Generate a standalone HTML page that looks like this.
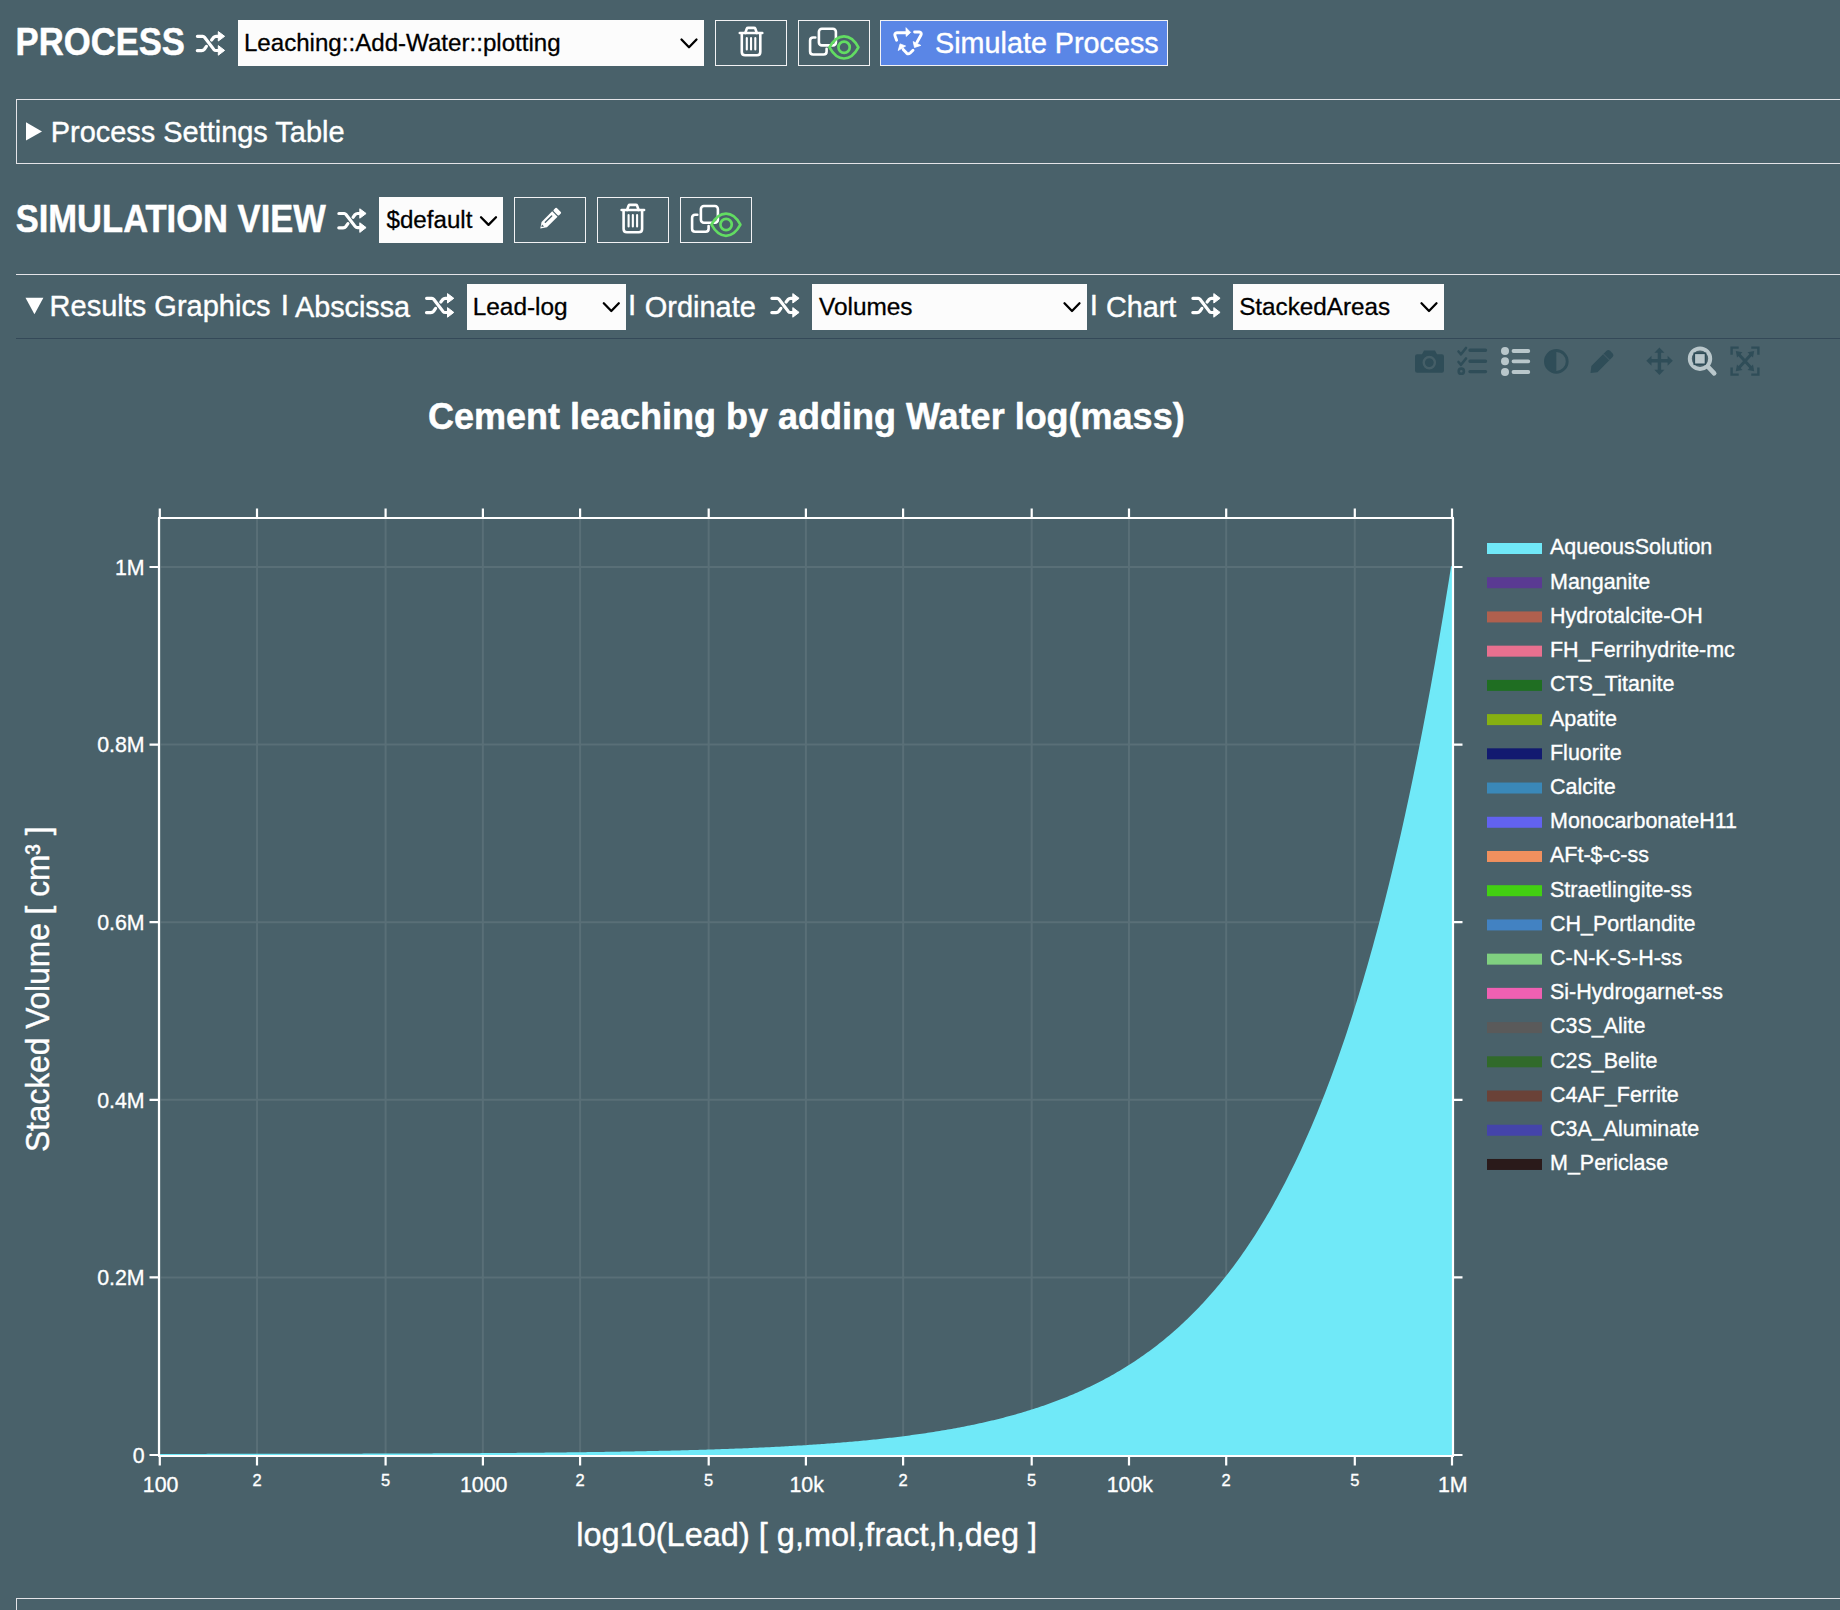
<!DOCTYPE html>
<html><head><meta charset="utf-8">
<style>
html,body{margin:0;padding:0;}
body{width:1840px;height:1610px;overflow:hidden;background:#49616a;position:relative;font-family:"Liberation Sans",sans-serif;}
svg{position:absolute;left:0;top:0;}
svg text{font-family:"Liberation Sans",sans-serif;}
.sel{position:absolute;background:#fcfcfc;}
.btn{position:absolute;box-sizing:border-box;border:1.4px solid #f2f2f4;}
.hl{position:absolute;height:1px;background:#e4e4e8;}
</style></head><body>
<div class="sel" style="left:238px;top:20px;width:466px;height:46px;"></div>
<div class="btn" style="left:715px;top:20px;width:72px;height:46px;"></div>
<div class="btn" style="left:798px;top:20px;width:72px;height:46px;"></div>
<div class="btn" style="left:880px;top:20px;width:288px;height:46px;background:#5a86e6;"></div>
<div style="position:absolute;left:16px;top:99px;width:1830px;height:65px;box-sizing:border-box;border:1px solid #e4e4e8;border-right:none;"></div>
<div class="sel" style="left:379px;top:197px;width:124px;height:46px;"></div>
<div class="btn" style="left:514px;top:197px;width:72px;height:46px;"></div>
<div class="btn" style="left:597px;top:197px;width:72px;height:46px;"></div>
<div class="btn" style="left:680px;top:197px;width:72px;height:46px;"></div>
<div class="hl" style="left:16px;top:274px;width:1824px;"></div>
<div class="hl" style="left:16px;top:338px;width:1824px;background:#344958;"></div>
<div class="sel" style="left:467px;top:284px;width:159px;height:46px;"></div>
<div class="sel" style="left:812px;top:284px;width:275px;height:46px;"></div>
<div class="sel" style="left:1233px;top:284px;width:211px;height:46px;"></div>
<div class="hl" style="left:16px;top:1598px;width:1824px;"></div>
<div style="position:absolute;left:16px;top:1598px;width:1px;height:12px;background:#e4e4e8;"></div>
<svg width="1840" height="1610" viewBox="0 0 1840 1610"><g transform="translate(196,31) scale(1.0)" fill="none" stroke="#fff" stroke-width="3.2" stroke-linecap="round" stroke-linejoin="round"><path d="M1.4,5.3 H6.8 Q7.8,5.3 8.5,6.2 L17.8,18.4 Q18.7,19.5 20,19.5 H24"/><path d="M1.3,19.6 H5.6 Q7.3,19.6 8.4,18.2 L10.4,15.4"/><path d="M15.6,9 L17.6,6.4 Q18.6,5.3 20,5.3 H24"/></g><g transform="translate(196,31) scale(1.0)" fill="#fff" stroke="#fff" stroke-width="1" stroke-linejoin="round"><path d="M22.3,0.6 L28.6,5.3 L22.3,10 Z"/><path d="M22.3,14.6 L28.6,19.4 L22.3,24.2 Z"/></g>
<path d="M681.5,39.5 L689.0,47.2 L696.5,39.5" fill="none" stroke="#000" stroke-width="2.3" stroke-linecap="round" stroke-linejoin="round"/>
<g transform="translate(738.5,27)" fill="none" stroke="#fff" stroke-width="2.6" stroke-linecap="round" stroke-linejoin="round"><path d="M1.3,6 H23.8"/><path d="M6.8,6 L8.3,1.6 C8.6,1.0 9,0.9 9.6,0.9 H15.5 C16.1,0.9 16.5,1.0 16.8,1.6 L18.3,6"/><path d="M3.3,6.5 V25 C3.3,27 4.6,28.3 6.6,28.3 H18.5 C20.5,28.3 21.8,27 21.8,25 V6.5"/><path d="M8.3,11 V22.5 M12.55,11 V22.5 M16.8,11 V22.5" stroke-width="2.1"/></g>
<g transform="translate(798,20)" fill="none" stroke-linecap="round" stroke-linejoin="round"><rect x="20.9" y="8.7" width="17" height="16.7" rx="3" stroke="#fff" stroke-width="2.6"/><path d="M17.3,17.5 H15.1 C13.2,17.5 12.1,18.6 12.1,20.5 V31.5 C12.1,33.4 13.2,34.5 15.1,34.5 H25.6 C27.5,34.5 28.6,33.4 28.6,31.5 V28.8" stroke="#fff" stroke-width="2.6"/><path d="M31.5,27.4 C35,21 39.5,16.4 46,16.4 C52.5,16.4 57,21 60.4,27.4 C57,33.8 52.5,38.5 46,38.5 C39.5,38.5 35,33.8 31.5,27.4 Z" stroke="#62dc62" stroke-width="2.7"/><circle cx="46.1" cy="27.2" r="5.65" stroke="#62dc62" stroke-width="2.7"/></g>
<g transform="translate(892,26)" fill="none" stroke="#fff" stroke-width="2.9" stroke-linecap="round" stroke-linejoin="round"><path d="M4.6,14.2 L2.9,9.6 C2.5,8.2 3.3,6.8 4.9,6.8 H14.5"/><path d="M22.6,6 H27.3 C28.9,6 29.8,7.6 29,9 L25,16.2"/><path d="M21,24.3 L18.2,27 C17.2,27.9 15.6,28 14.6,27.1 L11.2,23.4"/></g><g transform="translate(892,26)" fill="#fff" stroke="#fff" stroke-width="0.8" stroke-linejoin="round"><path d="M14,1.7 L18.6,6.4 L14.2,10.4 Z"/><path d="M21.2,15.6 L28.8,19.4 L22.5,21.5 Z"/><path d="M6.2,24.5 L8.1,17.9 L13.6,20 Z"/></g>
<path d="M26,122.3 L42,131.4 L26,140.5 Z" fill="#fff"/>
<g transform="translate(337.5,208.2) scale(1.0)" fill="none" stroke="#fff" stroke-width="3.2" stroke-linecap="round" stroke-linejoin="round"><path d="M1.4,5.3 H6.8 Q7.8,5.3 8.5,6.2 L17.8,18.4 Q18.7,19.5 20,19.5 H24"/><path d="M1.3,19.6 H5.6 Q7.3,19.6 8.4,18.2 L10.4,15.4"/><path d="M15.6,9 L17.6,6.4 Q18.6,5.3 20,5.3 H24"/></g><g transform="translate(337.5,208.2) scale(1.0)" fill="#fff" stroke="#fff" stroke-width="1" stroke-linejoin="round"><path d="M22.3,0.6 L28.6,5.3 L22.3,10 Z"/><path d="M22.3,14.6 L28.6,19.4 L22.3,24.2 Z"/></g>
<path d="M481,217.2 L488.5,224.89999999999998 L496,217.2" fill="none" stroke="#000" stroke-width="2.3" stroke-linecap="round" stroke-linejoin="round"/>
<g transform="translate(540.3,228.6) rotate(-45)"><path d="M0,0 L5.6,-3.8 H20.6 V3.8 H5.6 Z" fill="#fff"/><rect x="21.8" y="-3.8" width="4.4" height="7.6" rx="1" fill="#fff"/><path d="M8,-0.9 H17" stroke="#49616a" stroke-width="1.4" stroke-linecap="round"/><path d="M1.9,-0.5 L4.1,-1.8 L4.1,1.3 Z" fill="#49616a"/></g>
<g transform="translate(620.3,204)" fill="none" stroke="#fff" stroke-width="2.6" stroke-linecap="round" stroke-linejoin="round"><path d="M1.3,6 H23.8"/><path d="M6.8,6 L8.3,1.6 C8.6,1.0 9,0.9 9.6,0.9 H15.5 C16.1,0.9 16.5,1.0 16.8,1.6 L18.3,6"/><path d="M3.3,6.5 V25 C3.3,27 4.6,28.3 6.6,28.3 H18.5 C20.5,28.3 21.8,27 21.8,25 V6.5"/><path d="M8.3,11 V22.5 M12.55,11 V22.5 M16.8,11 V22.5" stroke-width="2.1"/></g>
<g transform="translate(680,197.3)" fill="none" stroke-linecap="round" stroke-linejoin="round"><rect x="20.9" y="8.7" width="17" height="16.7" rx="3" stroke="#fff" stroke-width="2.6"/><path d="M17.3,17.5 H15.1 C13.2,17.5 12.1,18.6 12.1,20.5 V31.5 C12.1,33.4 13.2,34.5 15.1,34.5 H25.6 C27.5,34.5 28.6,33.4 28.6,31.5 V28.8" stroke="#fff" stroke-width="2.6"/><path d="M31.5,27.4 C35,21 39.5,16.4 46,16.4 C52.5,16.4 57,21 60.4,27.4 C57,33.8 52.5,38.5 46,38.5 C39.5,38.5 35,33.8 31.5,27.4 Z" stroke="#62dc62" stroke-width="2.7"/><circle cx="46.1" cy="27.2" r="5.65" stroke="#62dc62" stroke-width="2.7"/></g>
<path d="M25.5,297.7 L43.4,297.7 L34.45,314.3 Z" fill="#fff"/>
<g transform="translate(425.2,293) scale(1.0)" fill="none" stroke="#fff" stroke-width="3.2" stroke-linecap="round" stroke-linejoin="round"><path d="M1.4,5.3 H6.8 Q7.8,5.3 8.5,6.2 L17.8,18.4 Q18.7,19.5 20,19.5 H24"/><path d="M1.3,19.6 H5.6 Q7.3,19.6 8.4,18.2 L10.4,15.4"/><path d="M15.6,9 L17.6,6.4 Q18.6,5.3 20,5.3 H24"/></g><g transform="translate(425.2,293) scale(1.0)" fill="#fff" stroke="#fff" stroke-width="1" stroke-linejoin="round"><path d="M22.3,0.6 L28.6,5.3 L22.3,10 Z"/><path d="M22.3,14.6 L28.6,19.4 L22.3,24.2 Z"/></g>
<path d="M603.8,303.3 L611.3,311.0 L618.8,303.3" fill="none" stroke="#000" stroke-width="2.3" stroke-linecap="round" stroke-linejoin="round"/>
<g transform="translate(770.5,293) scale(1.0)" fill="none" stroke="#fff" stroke-width="3.2" stroke-linecap="round" stroke-linejoin="round"><path d="M1.4,5.3 H6.8 Q7.8,5.3 8.5,6.2 L17.8,18.4 Q18.7,19.5 20,19.5 H24"/><path d="M1.3,19.6 H5.6 Q7.3,19.6 8.4,18.2 L10.4,15.4"/><path d="M15.6,9 L17.6,6.4 Q18.6,5.3 20,5.3 H24"/></g><g transform="translate(770.5,293) scale(1.0)" fill="#fff" stroke="#fff" stroke-width="1" stroke-linejoin="round"><path d="M22.3,0.6 L28.6,5.3 L22.3,10 Z"/><path d="M22.3,14.6 L28.6,19.4 L22.3,24.2 Z"/></g>
<path d="M1064.5,303.3 L1072.0,311.0 L1079.5,303.3" fill="none" stroke="#000" stroke-width="2.3" stroke-linecap="round" stroke-linejoin="round"/>
<g transform="translate(1191.5,293) scale(1.0)" fill="none" stroke="#fff" stroke-width="3.2" stroke-linecap="round" stroke-linejoin="round"><path d="M1.4,5.3 H6.8 Q7.8,5.3 8.5,6.2 L17.8,18.4 Q18.7,19.5 20,19.5 H24"/><path d="M1.3,19.6 H5.6 Q7.3,19.6 8.4,18.2 L10.4,15.4"/><path d="M15.6,9 L17.6,6.4 Q18.6,5.3 20,5.3 H24"/></g><g transform="translate(1191.5,293) scale(1.0)" fill="#fff" stroke="#fff" stroke-width="1" stroke-linejoin="round"><path d="M22.3,0.6 L28.6,5.3 L22.3,10 Z"/><path d="M22.3,14.6 L28.6,19.4 L22.3,24.2 Z"/></g>
<path d="M1421.5,303.3 L1429.0,311.0 L1436.5,303.3" fill="none" stroke="#000" stroke-width="2.3" stroke-linecap="round" stroke-linejoin="round"/>
<g fill="#2f4d58"><path d="M1415,356.5 Q1415,354.3 1417.2,354.3 H1422 L1424,350.5 H1435 L1437,354.3 H1441.8 Q1444,354.3 1444,356.5 V370.5 Q1444,372.7 1441.8,372.7 H1417.2 Q1415,372.7 1415,370.5 Z"/></g>
<circle cx="1429.3" cy="362.6" r="5.6" fill="none" stroke="#49616a" stroke-width="2.4" opacity="0.85"/>
<g fill="none" stroke="#2f4d58" stroke-width="2.6" stroke-linecap="round" stroke-linejoin="round"><path d="M1458.5,351.5 L1461,354.3 L1466,348"/><path d="M1458.5,362 L1461,364.8 L1466,358.5"/><circle cx="1461.3" cy="371.2" r="2.6"/><path d="M1470,350.3 H1485.5 M1470,361.3 H1485.5 M1470,371.6 H1485.5" stroke-width="3.4"/></g>
<g fill="#b9c7cb"><circle cx="1505" cy="351" r="4"/><circle cx="1505" cy="361.3" r="4"/><circle cx="1505" cy="372" r="4"/></g>
<g stroke="#b9c7cb" stroke-width="3.8" stroke-linecap="round"><path d="M1513.5,351 H1528.3 M1513.5,361.3 H1528.3 M1513.5,372 H1528.3"/></g>
<circle cx="1556.3" cy="361.4" r="10.9" fill="none" stroke="#2f4d58" stroke-width="2.8"/>
<path d="M1556.3,350.5 A10.9,10.9 0 0 0 1556.3,372.3 Z" fill="#2f4d58"/>
<g transform="translate(1590.5,373) rotate(-45)"><path d="M0,0 L5.5,-4.3 H27 Q29.5,-4.3 29.5,-1.8 V1.8 Q29.5,4.3 27,4.3 H5.5 Z" fill="#2f4d58"/><path d="M22.5,-4.5 V4.5" stroke="#49616a" stroke-width="1.2" opacity="0.6"/></g>
<g stroke="#2f4d58" stroke-width="3.4" stroke-linecap="butt"><path d="M1650,360.8 H1669.3 M1659.4,351.2 V370.8"/></g>
<g fill="#2f4d58"><path d="M1646.3,360.8 L1651.5,355.8 V365.8 Z"/><path d="M1672.8,360.8 L1667.6,355.8 V365.8 Z"/><path d="M1659.4,347.6 L1654.4,352.8 H1664.4 Z"/><path d="M1659.4,374.9 L1654.4,369.7 H1664.4 Z"/></g>
<circle cx="1700" cy="358.7" r="10.2" fill="none" stroke="#b9c7cb" stroke-width="4"/>
<rect x="1694.3" y="353.3" width="11.2" height="11" fill="#b9c7cb" stroke="#2f4d58" stroke-width="1.6"/>
<path d="M1707.5,366.2 L1714.2,373.4" stroke="#b9c7cb" stroke-width="4.6" stroke-linecap="round"/>
<g fill="none" stroke="#2f4d58" stroke-width="2.4" stroke-linecap="square"><path d="M1731.6,353.5 V347.6 H1737.5 M1752.5,347.6 H1758.4 V353.5 M1731.6,368.7 V374.6 H1737.5 M1752.5,374.6 H1758.4 V368.7"/></g>
<g stroke="#2f4d58" stroke-width="3" stroke-linecap="butt"><path d="M1738.5,354 L1751.5,368.2 M1751.5,354 L1738.5,368.2"/></g>
<g fill="#2f4d58"><path d="M1735.8,351 L1742.5,352.2 L1737,357.6 Z"/><path d="M1754.2,351 L1747.5,352.2 L1753,357.6 Z"/><path d="M1735.8,371.2 L1742.5,370 L1737,364.6 Z"/><path d="M1754.2,371.2 L1747.5,370 L1753,364.6 Z"/></g>
<text id="process" x="0" y="0" font-size="38.500" font-weight="bold" fill="#fff" stroke="#fff" stroke-width="0.5" stroke-linejoin="round" transform="translate(15.60,55.10) scale(0.9000,1)">PROCESS</text>
<text id="leach" x="0" y="0" font-size="24.400" fill="#000" stroke="#000" stroke-width="0.3" stroke-linejoin="round" transform="translate(243.90,51.10) scale(0.9886,1)">Leaching::Add-Water::plotting</text>
<text id="simulate" x="0" y="0" font-size="29.500" fill="#fff" stroke="#fff" stroke-width="0.4" stroke-linejoin="round" transform="translate(935.00,52.60) scale(0.9750,1)">Simulate Process</text>
<text id="pst" x="0" y="0" font-size="29.500" fill="#fff" stroke="#fff" stroke-width="0.4" stroke-linejoin="round" transform="translate(50.70,141.80) scale(0.9811,1)">Process Settings Table</text>
<text id="simview" x="0" y="0" font-size="38.500" font-weight="bold" fill="#fff" stroke="#fff" stroke-width="0.5" stroke-linejoin="round" transform="translate(15.70,232.10) scale(0.8974,1)">SIMULATION VIEW</text>
<text id="default" x="0" y="0" font-size="24.400" fill="#000" stroke="#000" stroke-width="0.3" stroke-linejoin="round" transform="translate(386.50,228.00) scale(0.9895,1)">$default</text>
<text id="results" x="0" y="0" font-size="29.500" fill="#fff" stroke="#fff" stroke-width="0.4" stroke-linejoin="round" transform="translate(49.60,316.00) scale(0.9832,1)">Results Graphics</text>
<text id="I1" x="0" y="0" font-size="29.500" fill="#fff" stroke="#fff" stroke-width="0.4" stroke-linejoin="round" transform="translate(280.70,315.20) scale(1.0000,1)">I</text>
<text id="abscissa" x="0" y="0" font-size="29.500" fill="#fff" stroke="#fff" stroke-width="0.4" stroke-linejoin="round" transform="translate(295.00,316.80) scale(0.9750,1)">Abscissa</text>
<text id="leadlog" x="0" y="0" font-size="24.400" fill="#000" stroke="#000" stroke-width="0.3" stroke-linejoin="round" transform="translate(472.70,314.80) scale(1.0001,1)">Lead-log</text>
<text id="I2" x="0" y="0" font-size="29.500" fill="#fff" stroke="#fff" stroke-width="0.4" stroke-linejoin="round" transform="translate(628.10,315.20) scale(1.0000,1)">I</text>
<text id="ordinate" x="0" y="0" font-size="29.500" fill="#fff" stroke="#fff" stroke-width="0.4" stroke-linejoin="round" transform="translate(644.70,316.80) scale(0.9831,1)">Ordinate</text>
<text id="volumes" x="0" y="0" font-size="24.400" fill="#000" stroke="#000" stroke-width="0.3" stroke-linejoin="round" transform="translate(819.00,314.80) scale(1.0000,1)">Volumes</text>
<text id="I3" x="0" y="0" font-size="29.500" fill="#fff" stroke="#fff" stroke-width="0.4" stroke-linejoin="round" transform="translate(1089.70,315.20) scale(1.0000,1)">I</text>
<text id="chart" x="0" y="0" font-size="29.500" fill="#fff" stroke="#fff" stroke-width="0.4" stroke-linejoin="round" transform="translate(1106.00,316.80) scale(0.9750,1)">Chart</text>
<text id="stacked" x="0" y="0" font-size="24.400" fill="#000" stroke="#000" stroke-width="0.3" stroke-linejoin="round" transform="translate(1239.20,314.80) scale(0.9940,1)">StackedAreas</text>
<text id="title" x="0" y="0" font-size="37.500" font-weight="bold" fill="#fff" stroke="#fff" stroke-width="0.5" stroke-linejoin="round" transform="translate(428.00,429.00) scale(0.9600,1)">Cement leaching by adding Water log(mass)</text>
<text id="xtitle" x="0" y="0" font-size="33.000" fill="#fff" stroke="#fff" stroke-width="0.4" stroke-linejoin="round" transform="translate(576.20,1545.80) scale(0.9855,1)">log10(Lead) [ g,mol,fract,h,deg ]</text>
<path d="M159.80,518 V1456 M257.05,518 V1456 M385.60,518 V1456 M482.85,518 V1456 M580.10,518 V1456 M708.65,518 V1456 M805.90,518 V1456 M903.15,518 V1456 M1031.70,518 V1456 M1128.95,518 V1456 M1226.20,518 V1456 M1354.75,518 V1456 M1452.00,518 V1456 M159,1455.00 H1453 M159,1277.40 H1453 M159,1099.80 H1453 M159,922.20 H1453 M159,744.60 H1453 M159,567.00 H1453" stroke="rgba(255,255,255,0.09)" stroke-width="2" fill="none"/>
<path d="M159.8,1455.0 L159.8,1454.91 L161.8,1454.91 L163.8,1454.91 L165.8,1454.91 L167.8,1454.91 L169.8,1454.90 L171.8,1454.90 L173.8,1454.90 L175.8,1454.90 L177.8,1454.90 L179.8,1454.90 L181.8,1454.90 L183.8,1454.89 L185.8,1454.89 L187.8,1454.89 L189.8,1454.89 L191.8,1454.89 L193.8,1454.89 L195.8,1454.89 L197.8,1454.88 L199.8,1454.88 L201.8,1454.88 L203.8,1454.88 L205.8,1454.88 L207.8,1454.87 L209.8,1454.87 L211.8,1454.87 L213.8,1454.87 L215.8,1454.87 L217.8,1454.87 L219.8,1454.86 L221.8,1454.86 L223.8,1454.86 L225.8,1454.86 L227.8,1454.86 L229.8,1454.85 L231.8,1454.85 L233.8,1454.85 L235.8,1454.85 L237.8,1454.85 L239.8,1454.84 L241.8,1454.84 L243.8,1454.84 L245.8,1454.84 L247.8,1454.83 L249.8,1454.83 L251.8,1454.83 L253.8,1454.83 L255.8,1454.82 L257.8,1454.82 L259.8,1454.82 L261.8,1454.82 L263.8,1454.81 L265.8,1454.81 L267.8,1454.81 L269.8,1454.81 L271.8,1454.80 L273.8,1454.80 L275.8,1454.80 L277.8,1454.79 L279.8,1454.79 L281.8,1454.79 L283.8,1454.79 L285.8,1454.78 L287.8,1454.78 L289.8,1454.78 L291.8,1454.77 L293.8,1454.77 L295.8,1454.77 L297.8,1454.76 L299.8,1454.76 L301.8,1454.76 L303.8,1454.75 L305.8,1454.75 L307.8,1454.74 L309.8,1454.74 L311.8,1454.74 L313.8,1454.73 L315.8,1454.73 L317.8,1454.73 L319.8,1454.72 L321.8,1454.72 L323.8,1454.71 L325.8,1454.71 L327.8,1454.71 L329.8,1454.70 L331.8,1454.70 L333.8,1454.69 L335.8,1454.69 L337.8,1454.68 L339.8,1454.68 L341.8,1454.68 L343.8,1454.67 L345.8,1454.67 L347.8,1454.66 L349.8,1454.66 L351.8,1454.65 L353.8,1454.65 L355.8,1454.64 L357.8,1454.64 L359.8,1454.63 L361.8,1454.63 L363.8,1454.62 L365.8,1454.61 L367.8,1454.61 L369.8,1454.60 L371.8,1454.60 L373.8,1454.59 L375.8,1454.59 L377.8,1454.58 L379.8,1454.57 L381.8,1454.57 L383.8,1454.56 L385.8,1454.56 L387.8,1454.55 L389.8,1454.54 L391.8,1454.54 L393.8,1454.53 L395.8,1454.52 L397.8,1454.52 L399.8,1454.51 L401.8,1454.50 L403.8,1454.49 L405.8,1454.49 L407.8,1454.48 L409.8,1454.47 L411.8,1454.46 L413.8,1454.46 L415.8,1454.45 L417.8,1454.44 L419.8,1454.43 L421.8,1454.43 L423.8,1454.42 L425.8,1454.41 L427.8,1454.40 L429.8,1454.39 L431.8,1454.38 L433.8,1454.37 L435.8,1454.37 L437.8,1454.36 L439.8,1454.35 L441.8,1454.34 L443.8,1454.33 L445.8,1454.32 L447.8,1454.31 L449.8,1454.30 L451.8,1454.29 L453.8,1454.28 L455.8,1454.27 L457.8,1454.26 L459.8,1454.25 L461.8,1454.24 L463.8,1454.22 L465.8,1454.21 L467.8,1454.20 L469.8,1454.19 L471.8,1454.18 L473.8,1454.17 L475.8,1454.16 L477.8,1454.14 L479.8,1454.13 L481.8,1454.12 L483.8,1454.11 L485.8,1454.09 L487.8,1454.08 L489.8,1454.07 L491.8,1454.05 L493.8,1454.04 L495.8,1454.03 L497.8,1454.01 L499.8,1454.00 L501.8,1453.98 L503.8,1453.97 L505.8,1453.95 L507.8,1453.94 L509.8,1453.92 L511.8,1453.91 L513.8,1453.89 L515.8,1453.88 L517.8,1453.86 L519.8,1453.84 L521.8,1453.83 L523.8,1453.81 L525.8,1453.79 L527.8,1453.78 L529.8,1453.76 L531.8,1453.74 L533.8,1453.72 L535.8,1453.70 L537.8,1453.69 L539.8,1453.67 L541.8,1453.65 L543.8,1453.63 L545.8,1453.61 L547.8,1453.59 L549.8,1453.57 L551.8,1453.55 L553.8,1453.53 L555.8,1453.51 L557.8,1453.48 L559.8,1453.46 L561.8,1453.44 L563.8,1453.42 L565.8,1453.40 L567.8,1453.37 L569.8,1453.35 L571.8,1453.33 L573.8,1453.30 L575.8,1453.28 L577.8,1453.25 L579.8,1453.23 L581.8,1453.20 L583.8,1453.18 L585.8,1453.15 L587.8,1453.12 L589.8,1453.10 L591.8,1453.07 L593.8,1453.04 L595.8,1453.01 L597.8,1452.99 L599.8,1452.96 L601.8,1452.93 L603.8,1452.90 L605.8,1452.87 L607.8,1452.84 L609.8,1452.81 L611.8,1452.77 L613.8,1452.74 L615.8,1452.71 L617.8,1452.68 L619.8,1452.64 L621.8,1452.61 L623.8,1452.57 L625.8,1452.54 L627.8,1452.50 L629.8,1452.47 L631.8,1452.43 L633.8,1452.40 L635.8,1452.36 L637.8,1452.32 L639.8,1452.28 L641.8,1452.24 L643.8,1452.20 L645.8,1452.16 L647.8,1452.12 L649.8,1452.08 L651.8,1452.04 L653.8,1452.00 L655.8,1451.95 L657.8,1451.91 L659.8,1451.87 L661.8,1451.82 L663.8,1451.77 L665.8,1451.73 L667.8,1451.68 L669.8,1451.63 L671.8,1451.59 L673.8,1451.54 L675.8,1451.49 L677.8,1451.44 L679.8,1451.39 L681.8,1451.33 L683.8,1451.28 L685.8,1451.23 L687.8,1451.17 L689.8,1451.12 L691.8,1451.06 L693.8,1451.01 L695.8,1450.95 L697.8,1450.89 L699.8,1450.83 L701.8,1450.77 L703.8,1450.71 L705.8,1450.65 L707.8,1450.59 L709.8,1450.52 L711.8,1450.46 L713.8,1450.39 L715.8,1450.33 L717.8,1450.26 L719.8,1450.19 L721.8,1450.12 L723.8,1450.05 L725.8,1449.98 L727.8,1449.91 L729.8,1449.84 L731.8,1449.76 L733.8,1449.69 L735.8,1449.61 L737.8,1449.53 L739.8,1449.46 L741.8,1449.38 L743.8,1449.30 L745.8,1449.21 L747.8,1449.13 L749.8,1449.05 L751.8,1448.96 L753.8,1448.87 L755.8,1448.79 L757.8,1448.70 L759.8,1448.61 L761.8,1448.52 L763.8,1448.42 L765.8,1448.33 L767.8,1448.23 L769.8,1448.13 L771.8,1448.04 L773.8,1447.94 L775.8,1447.83 L777.8,1447.73 L779.8,1447.63 L781.8,1447.52 L783.8,1447.41 L785.8,1447.31 L787.8,1447.19 L789.8,1447.08 L791.8,1446.97 L793.8,1446.85 L795.8,1446.74 L797.8,1446.62 L799.8,1446.50 L801.8,1446.38 L803.8,1446.25 L805.8,1446.13 L807.8,1446.00 L809.8,1445.87 L811.8,1445.74 L813.8,1445.61 L815.8,1445.47 L817.8,1445.33 L819.8,1445.20 L821.8,1445.05 L823.8,1444.91 L825.8,1444.77 L827.8,1444.62 L829.8,1444.47 L831.8,1444.32 L833.8,1444.17 L835.8,1444.01 L837.8,1443.85 L839.8,1443.69 L841.8,1443.53 L843.8,1443.37 L845.8,1443.20 L847.8,1443.03 L849.8,1442.86 L851.8,1442.68 L853.8,1442.51 L855.8,1442.33 L857.8,1442.15 L859.8,1441.96 L861.8,1441.77 L863.8,1441.58 L865.8,1441.39 L867.8,1441.20 L869.8,1441.00 L871.8,1440.80 L873.8,1440.59 L875.8,1440.39 L877.8,1440.18 L879.8,1439.96 L881.8,1439.75 L883.8,1439.53 L885.8,1439.31 L887.8,1439.08 L889.8,1438.85 L891.8,1438.62 L893.8,1438.38 L895.8,1438.15 L897.8,1437.90 L899.8,1437.66 L901.8,1437.41 L903.8,1437.16 L905.8,1436.90 L907.8,1436.64 L909.8,1436.38 L911.8,1436.11 L913.8,1435.84 L915.8,1435.56 L917.8,1435.28 L919.8,1435.00 L921.8,1434.71 L923.8,1434.42 L925.8,1434.13 L927.8,1433.83 L929.8,1433.52 L931.8,1433.22 L933.8,1432.90 L935.8,1432.59 L937.8,1432.26 L939.8,1431.94 L941.8,1431.61 L943.8,1431.27 L945.8,1430.93 L947.8,1430.58 L949.8,1430.23 L951.8,1429.88 L953.8,1429.52 L955.8,1429.15 L957.8,1428.78 L959.8,1428.40 L961.8,1428.02 L963.8,1427.64 L965.8,1427.24 L967.8,1426.84 L969.8,1426.44 L971.8,1426.03 L973.8,1425.61 L975.8,1425.19 L977.8,1424.76 L979.8,1424.33 L981.8,1423.89 L983.8,1423.44 L985.8,1422.99 L987.8,1422.53 L989.8,1422.06 L991.8,1421.59 L993.8,1421.11 L995.8,1420.62 L997.8,1420.13 L999.8,1419.63 L1001.8,1419.12 L1003.8,1418.61 L1005.8,1418.09 L1007.8,1417.56 L1009.8,1417.02 L1011.8,1416.47 L1013.8,1415.92 L1015.8,1415.36 L1017.8,1414.79 L1019.8,1414.21 L1021.8,1413.63 L1023.8,1413.03 L1025.8,1412.43 L1027.8,1411.82 L1029.8,1411.20 L1031.8,1410.57 L1033.8,1409.93 L1035.8,1409.28 L1037.8,1408.63 L1039.8,1407.96 L1041.8,1407.29 L1043.8,1406.60 L1045.8,1405.91 L1047.8,1405.20 L1049.8,1404.49 L1051.8,1403.76 L1053.8,1403.03 L1055.8,1402.28 L1057.8,1401.52 L1059.8,1400.76 L1061.8,1399.98 L1063.8,1399.19 L1065.8,1398.38 L1067.8,1397.57 L1069.8,1396.75 L1071.8,1395.91 L1073.8,1395.06 L1075.8,1394.20 L1077.8,1393.33 L1079.8,1392.44 L1081.8,1391.55 L1083.8,1390.63 L1085.8,1389.71 L1087.8,1388.77 L1089.8,1387.82 L1091.8,1386.86 L1093.8,1385.88 L1095.8,1384.89 L1097.8,1383.88 L1099.8,1382.86 L1101.8,1381.82 L1103.8,1380.77 L1105.8,1379.71 L1107.8,1378.63 L1109.8,1377.53 L1111.8,1376.42 L1113.8,1375.29 L1115.8,1374.14 L1117.8,1372.98 L1119.8,1371.81 L1121.8,1370.61 L1123.8,1369.40 L1125.8,1368.17 L1127.8,1366.92 L1129.8,1365.66 L1131.8,1364.38 L1133.8,1363.08 L1135.8,1361.76 L1137.8,1360.42 L1139.8,1359.06 L1141.8,1357.68 L1143.8,1356.29 L1145.8,1354.87 L1147.8,1353.43 L1149.8,1351.97 L1151.8,1350.49 L1153.8,1348.99 L1155.8,1347.47 L1157.8,1345.93 L1159.8,1344.36 L1161.8,1342.77 L1163.8,1341.16 L1165.8,1339.53 L1167.8,1337.87 L1169.8,1336.19 L1171.8,1334.48 L1173.8,1332.75 L1175.8,1331.00 L1177.8,1329.22 L1179.8,1327.41 L1181.8,1325.58 L1183.8,1323.72 L1185.8,1321.83 L1187.8,1319.92 L1189.8,1317.98 L1191.8,1316.02 L1193.8,1314.02 L1195.8,1312.00 L1197.8,1309.94 L1199.8,1307.86 L1201.8,1305.75 L1203.8,1303.61 L1205.8,1301.43 L1207.8,1299.23 L1209.8,1296.99 L1211.8,1294.72 L1213.8,1292.42 L1215.8,1290.09 L1217.8,1287.72 L1219.8,1285.32 L1221.8,1282.88 L1223.8,1280.41 L1225.8,1277.90 L1227.8,1275.36 L1229.8,1272.78 L1231.8,1270.16 L1233.8,1267.51 L1235.8,1264.82 L1237.8,1262.09 L1239.8,1259.32 L1241.8,1256.51 L1243.8,1253.66 L1245.8,1250.77 L1247.8,1247.84 L1249.8,1244.86 L1251.8,1241.85 L1253.8,1238.79 L1255.8,1235.68 L1257.8,1232.53 L1259.8,1229.34 L1261.8,1226.10 L1263.8,1222.81 L1265.8,1219.48 L1267.8,1216.10 L1269.8,1212.67 L1271.8,1209.19 L1273.8,1205.66 L1275.8,1202.08 L1277.8,1198.45 L1279.8,1194.76 L1281.8,1191.03 L1283.8,1187.24 L1285.8,1183.39 L1287.8,1179.49 L1289.8,1175.54 L1291.8,1171.53 L1293.8,1167.46 L1295.8,1163.33 L1297.8,1159.14 L1299.8,1154.89 L1301.8,1150.58 L1303.8,1146.21 L1305.8,1141.78 L1307.8,1137.28 L1309.8,1132.72 L1311.8,1128.09 L1313.8,1123.40 L1315.8,1118.64 L1317.8,1113.81 L1319.8,1108.91 L1321.8,1103.94 L1323.8,1098.90 L1325.8,1093.79 L1327.8,1088.60 L1329.8,1083.34 L1331.8,1078.01 L1333.8,1072.59 L1335.8,1067.10 L1337.8,1061.53 L1339.8,1055.88 L1341.8,1050.15 L1343.8,1044.34 L1345.8,1038.45 L1347.8,1032.47 L1349.8,1026.40 L1351.8,1020.25 L1353.8,1014.00 L1355.8,1007.67 L1357.8,1001.25 L1359.8,994.73 L1361.8,988.13 L1363.8,981.42 L1365.8,974.62 L1367.8,967.73 L1369.8,960.73 L1371.8,953.63 L1373.8,946.44 L1375.8,939.13 L1377.8,931.73 L1379.8,924.22 L1381.8,916.59 L1383.8,908.86 L1385.8,901.02 L1387.8,893.07 L1389.8,885.00 L1391.8,876.82 L1393.8,868.52 L1395.8,860.10 L1397.8,851.56 L1399.8,842.89 L1401.8,834.10 L1403.8,825.19 L1405.8,816.15 L1407.8,806.97 L1409.8,797.67 L1411.8,788.23 L1413.8,778.66 L1415.8,768.95 L1417.8,759.10 L1419.8,749.11 L1421.8,738.97 L1423.8,728.69 L1425.8,718.27 L1427.8,707.69 L1429.8,696.96 L1431.8,686.08 L1433.8,675.04 L1435.8,663.84 L1437.8,652.48 L1439.8,640.96 L1441.8,629.27 L1443.8,617.41 L1445.8,605.39 L1447.8,593.19 L1449.8,580.82 L1451.8,568.26 L1452.0,567.00 L1452.0,567.00 L1452.0,567.00 L1452.0,567.00 L1452.0,1455.0 Z" fill="#70e9f8" stroke="#70e9f8" stroke-width="2" stroke-linejoin="round"/>
<path d="M159,518 V1456 M158,518 H1454 M158,1456 H1454 M1453,518 V1456" stroke="#fff" stroke-width="2.2" fill="none"/>
<path d="M159.8,1456 V1465.5 M159.8,518 V508.5 M257.0,1456 V1465.5 M257.0,518 V508.5 M385.6,1456 V1465.5 M385.6,518 V508.5 M482.9,1456 V1465.5 M482.9,518 V508.5 M580.1,1456 V1465.5 M580.1,518 V508.5 M708.7,1456 V1465.5 M708.7,518 V508.5 M805.9,1456 V1465.5 M805.9,518 V508.5 M903.1,1456 V1465.5 M903.1,518 V508.5 M1031.7,1456 V1465.5 M1031.7,518 V508.5 M1129.0,1456 V1465.5 M1129.0,518 V508.5 M1226.2,1456 V1465.5 M1226.2,518 V508.5 M1354.8,1456 V1465.5 M1354.8,518 V508.5 M1452.0,1456 V1465.5 M1452.0,518 V508.5 M159,1455.0 H149.5 M1453,1455.0 H1462.5 M159,1277.4 H149.5 M1453,1277.4 H1462.5 M159,1099.8 H149.5 M1453,1099.8 H1462.5 M159,922.2 H149.5 M1453,922.2 H1462.5 M159,744.6 H149.5 M1453,744.6 H1462.5 M159,567.0 H149.5 M1453,567.0 H1462.5" stroke="#fff" stroke-width="2.2" fill="none"/>
<text x="0" y="0" font-size="22" fill="#fff" stroke="#fff" stroke-width="0.35" text-anchor="end" transform="translate(144.6,1462.7) scale(0.97,1)">0</text>
<text x="0" y="0" font-size="22" fill="#fff" stroke="#fff" stroke-width="0.35" text-anchor="end" transform="translate(144.6,1285.1) scale(0.97,1)">0.2M</text>
<text x="0" y="0" font-size="22" fill="#fff" stroke="#fff" stroke-width="0.35" text-anchor="end" transform="translate(144.6,1107.5) scale(0.97,1)">0.4M</text>
<text x="0" y="0" font-size="22" fill="#fff" stroke="#fff" stroke-width="0.35" text-anchor="end" transform="translate(144.6,929.9) scale(0.97,1)">0.6M</text>
<text x="0" y="0" font-size="22" fill="#fff" stroke="#fff" stroke-width="0.35" text-anchor="end" transform="translate(144.6,752.3) scale(0.97,1)">0.8M</text>
<text x="0" y="0" font-size="22" fill="#fff" stroke="#fff" stroke-width="0.35" text-anchor="end" transform="translate(144.6,574.7) scale(0.97,1)">1M</text>
<text x="0" y="0" font-size="22" fill="#fff" stroke="#fff" stroke-width="0.35" text-anchor="middle" transform="translate(160.6,1491.8) scale(0.97,1)">100</text>
<text x="0" y="0" font-size="22" fill="#fff" stroke="#fff" stroke-width="0.35" text-anchor="middle" transform="translate(483.7,1491.8) scale(0.97,1)">1000</text>
<text x="0" y="0" font-size="22" fill="#fff" stroke="#fff" stroke-width="0.35" text-anchor="middle" transform="translate(806.7,1491.8) scale(0.97,1)">10k</text>
<text x="0" y="0" font-size="22" fill="#fff" stroke="#fff" stroke-width="0.35" text-anchor="middle" transform="translate(1129.8,1491.8) scale(0.97,1)">100k</text>
<text x="0" y="0" font-size="22" fill="#fff" stroke="#fff" stroke-width="0.35" text-anchor="middle" transform="translate(1452.8,1491.8) scale(0.97,1)">1M</text>
<text x="0" y="0" font-size="16.5" fill="#fff" stroke="#fff" stroke-width="0.35" text-anchor="middle" transform="translate(257.0,1485.8) scale(1.0,1)">2</text>
<text x="0" y="0" font-size="16.5" fill="#fff" stroke="#fff" stroke-width="0.35" text-anchor="middle" transform="translate(385.6,1485.8) scale(1.0,1)">5</text>
<text x="0" y="0" font-size="16.5" fill="#fff" stroke="#fff" stroke-width="0.35" text-anchor="middle" transform="translate(580.1,1485.8) scale(1.0,1)">2</text>
<text x="0" y="0" font-size="16.5" fill="#fff" stroke="#fff" stroke-width="0.35" text-anchor="middle" transform="translate(708.7,1485.8) scale(1.0,1)">5</text>
<text x="0" y="0" font-size="16.5" fill="#fff" stroke="#fff" stroke-width="0.35" text-anchor="middle" transform="translate(903.1,1485.8) scale(1.0,1)">2</text>
<text x="0" y="0" font-size="16.5" fill="#fff" stroke="#fff" stroke-width="0.35" text-anchor="middle" transform="translate(1031.7,1485.8) scale(1.0,1)">5</text>
<text x="0" y="0" font-size="16.5" fill="#fff" stroke="#fff" stroke-width="0.35" text-anchor="middle" transform="translate(1226.2,1485.8) scale(1.0,1)">2</text>
<text x="0" y="0" font-size="16.5" fill="#fff" stroke="#fff" stroke-width="0.35" text-anchor="middle" transform="translate(1354.8,1485.8) scale(1.0,1)">5</text>
<text x="0" y="0" font-size="33" fill="#fff" stroke="#fff" stroke-width="0.4" text-anchor="middle" transform="translate(49,989.3) rotate(-90) scale(0.96,1)">Stacked Volume [ cm³ ]</text>
<rect x="1487" y="543.00" width="55" height="11" fill="#70e8f8"/>
<text x="0" y="0" font-size="21.8" fill="#fff" stroke="#fff" stroke-width="0.35" text-anchor="start" transform="translate(1550,554.4) scale(0.985,1)">AqueousSolution</text>
<rect x="1487" y="577.22" width="55" height="11" fill="#5a3a92"/>
<text x="0" y="0" font-size="21.8" fill="#fff" stroke="#fff" stroke-width="0.35" text-anchor="start" transform="translate(1550,588.62) scale(0.985,1)">Manganite</text>
<rect x="1487" y="611.44" width="55" height="11" fill="#b0604e"/>
<text x="0" y="0" font-size="21.8" fill="#fff" stroke="#fff" stroke-width="0.35" text-anchor="start" transform="translate(1550,622.84) scale(0.985,1)">Hydrotalcite-OH</text>
<rect x="1487" y="645.66" width="55" height="11" fill="#e8708f"/>
<text x="0" y="0" font-size="21.8" fill="#fff" stroke="#fff" stroke-width="0.35" text-anchor="start" transform="translate(1550,657.06) scale(0.985,1)">FH_Ferrihydrite-mc</text>
<rect x="1487" y="679.88" width="55" height="11" fill="#1f6e22"/>
<text x="0" y="0" font-size="21.8" fill="#fff" stroke="#fff" stroke-width="0.35" text-anchor="start" transform="translate(1550,691.28) scale(0.985,1)">CTS_Titanite</text>
<rect x="1487" y="714.10" width="55" height="11" fill="#86b012"/>
<text x="0" y="0" font-size="21.8" fill="#fff" stroke="#fff" stroke-width="0.35" text-anchor="start" transform="translate(1550,725.5) scale(0.985,1)">Apatite</text>
<rect x="1487" y="748.32" width="55" height="11" fill="#121a70"/>
<text x="0" y="0" font-size="21.8" fill="#fff" stroke="#fff" stroke-width="0.35" text-anchor="start" transform="translate(1550,759.72) scale(0.985,1)">Fluorite</text>
<rect x="1487" y="782.54" width="55" height="11" fill="#3a88b8"/>
<text x="0" y="0" font-size="21.8" fill="#fff" stroke="#fff" stroke-width="0.35" text-anchor="start" transform="translate(1550,793.94) scale(0.985,1)">Calcite</text>
<rect x="1487" y="816.76" width="55" height="11" fill="#6262f0"/>
<text x="0" y="0" font-size="21.8" fill="#fff" stroke="#fff" stroke-width="0.35" text-anchor="start" transform="translate(1550,828.16) scale(0.985,1)">MonocarbonateH11</text>
<rect x="1487" y="850.98" width="55" height="11" fill="#f0905e"/>
<text x="0" y="0" font-size="21.8" fill="#fff" stroke="#fff" stroke-width="0.35" text-anchor="start" transform="translate(1550,862.38) scale(0.985,1)">AFt-$-c-ss</text>
<rect x="1487" y="885.20" width="55" height="11" fill="#42d012"/>
<text x="0" y="0" font-size="21.8" fill="#fff" stroke="#fff" stroke-width="0.35" text-anchor="start" transform="translate(1550,896.6) scale(0.985,1)">Straetlingite-ss</text>
<rect x="1487" y="919.42" width="55" height="11" fill="#4282c2"/>
<text x="0" y="0" font-size="21.8" fill="#fff" stroke="#fff" stroke-width="0.35" text-anchor="start" transform="translate(1550,930.82) scale(0.985,1)">CH_Portlandite</text>
<rect x="1487" y="953.64" width="55" height="11" fill="#80d080"/>
<text x="0" y="0" font-size="21.8" fill="#fff" stroke="#fff" stroke-width="0.35" text-anchor="start" transform="translate(1550,965.04) scale(0.985,1)">C-N-K-S-H-ss</text>
<rect x="1487" y="987.86" width="55" height="11" fill="#f060b2"/>
<text x="0" y="0" font-size="21.8" fill="#fff" stroke="#fff" stroke-width="0.35" text-anchor="start" transform="translate(1550,999.26) scale(0.985,1)">Si-Hydrogarnet-ss</text>
<rect x="1487" y="1022.08" width="55" height="11" fill="#5a5a5a"/>
<text x="0" y="0" font-size="21.8" fill="#fff" stroke="#fff" stroke-width="0.35" text-anchor="start" transform="translate(1550,1033.48) scale(0.985,1)">C3S_Alite</text>
<rect x="1487" y="1056.30" width="55" height="11" fill="#316a2a"/>
<text x="0" y="0" font-size="21.8" fill="#fff" stroke="#fff" stroke-width="0.35" text-anchor="start" transform="translate(1550,1067.7) scale(0.985,1)">C2S_Belite</text>
<rect x="1487" y="1090.52" width="55" height="11" fill="#6a4238"/>
<text x="0" y="0" font-size="21.8" fill="#fff" stroke="#fff" stroke-width="0.35" text-anchor="start" transform="translate(1550,1101.92) scale(0.985,1)">C4AF_Ferrite</text>
<rect x="1487" y="1124.74" width="55" height="11" fill="#4444aa"/>
<text x="0" y="0" font-size="21.8" fill="#fff" stroke="#fff" stroke-width="0.35" text-anchor="start" transform="translate(1550,1136.14) scale(0.985,1)">C3A_Aluminate</text>
<rect x="1487" y="1158.96" width="55" height="11" fill="#2a1a1a"/>
<text x="0" y="0" font-size="21.8" fill="#fff" stroke="#fff" stroke-width="0.35" text-anchor="start" transform="translate(1550,1170.36) scale(0.985,1)">M_Periclase</text></svg>
</body></html>
